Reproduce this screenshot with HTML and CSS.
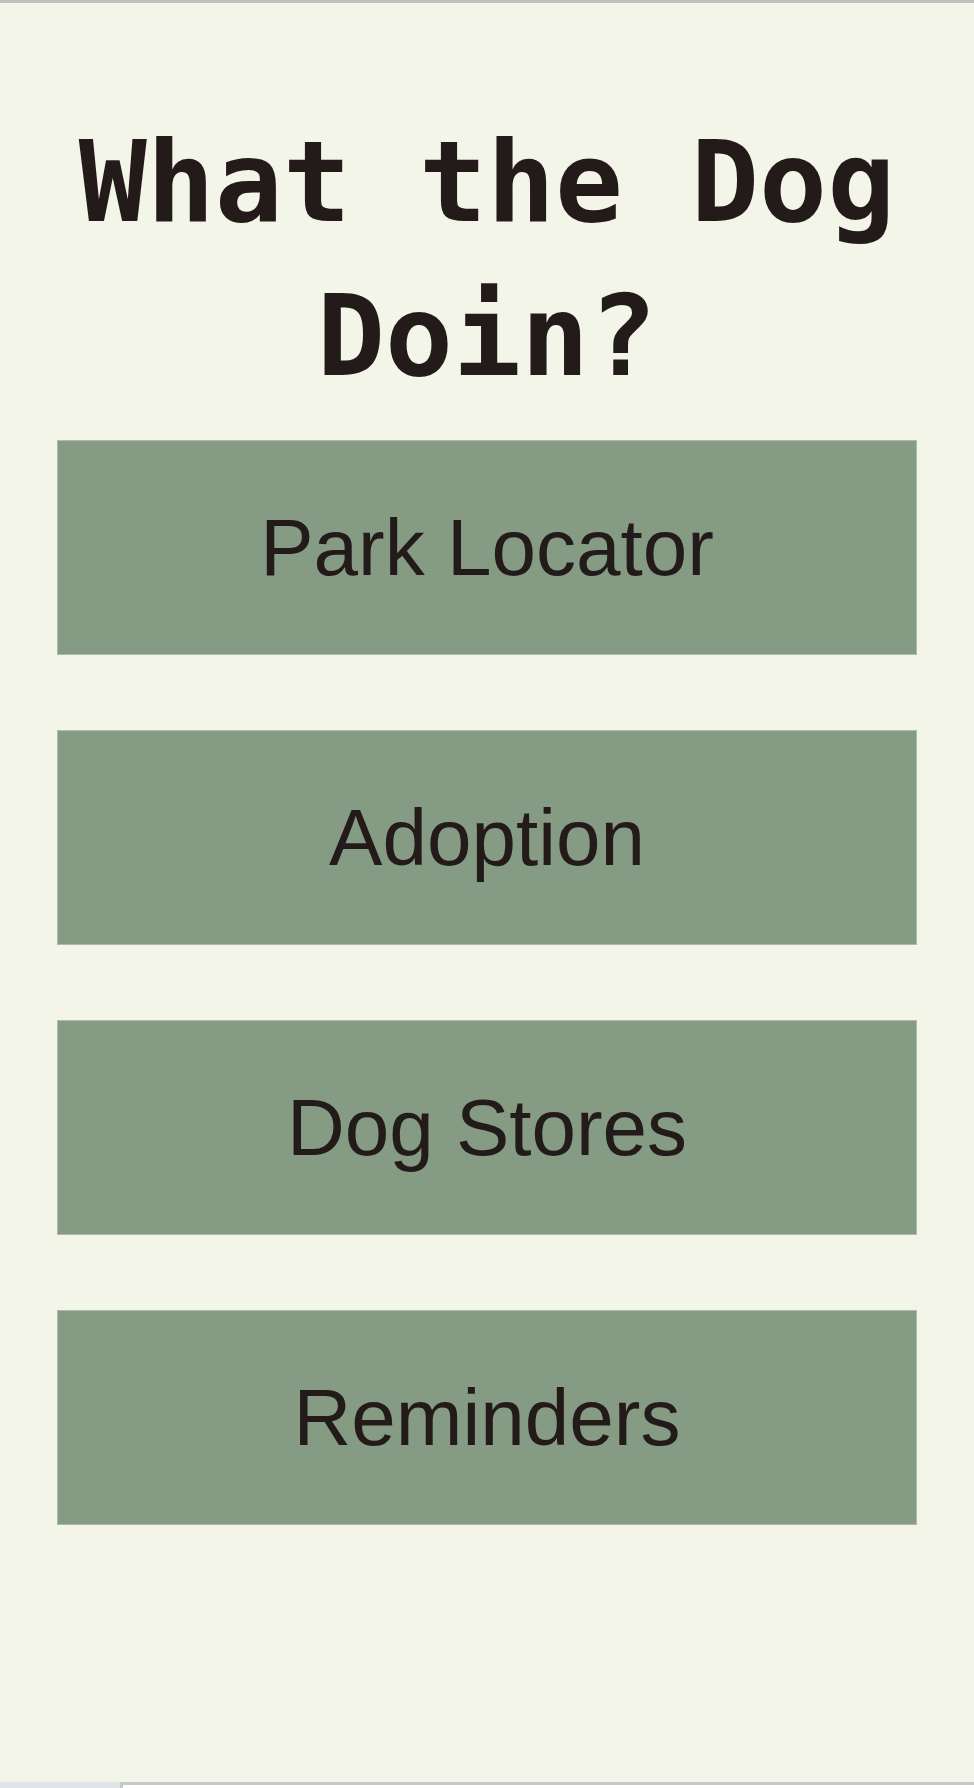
FILE: index.html
```html
<!DOCTYPE html>
<html lang="en">
<head>
<meta charset="utf-8">
<title>What the Dog Doin?</title>
<link rel="stylesheet" href="styles.css">
</head>
<body>
<div class="page">
  <div class="topbar"></div>
  <main class="content">
    <h1 class="title">What the Dog Doin?</h1>
    <nav class="menu">
      <a class="menu-btn" href="#">Park Locator</a>
      <a class="menu-btn" href="#">Adoption</a>
      <a class="menu-btn" href="#">Dog Stores</a>
      <a class="menu-btn" href="#">Reminders</a>
    </nav>
  </main>
  <div class="bottombar">
    <div class="bottom-left"></div>
    <div class="bottom-right"><div class="bottom-inner"></div></div>
  </div>
</div>
</body>
</html>
```

FILE: styles.css
```css
* { box-sizing: border-box; }
html, body { margin: 0; padding: 0; }
body {
  background: #f3f5e9;
  color: #231a1a;
  font-family: "Liberation Sans", Arial, sans-serif;
}
.page {
  height: 1788px;
  display: flex;
  flex-direction: column;
  overflow: hidden;
}
.topbar {
  height: 3px;
  background: #c0c0c0;
  flex: none;
}
.content {
  flex: 1;
  padding: 102px 57px 0;
}
.title {
  margin: 0;
  font-family: "DejaVu Sans Mono", "Liberation Mono", monospace;
  font-weight: bold;
  font-size: 113px;
  line-height: 154px;
  text-align: center;
  color: #231a1a;
}
.menu {
  margin-top: 27px;
  display: flex;
  flex-direction: column;
  gap: 75px;
}
.menu-btn {
  height: 215px;
  display: flex;
  align-items: center;
  justify-content: center;
  background: #859b84;
  border: 1px solid #aebba9;
  color: #231a1a;
  text-decoration: none;
  font-family: "Liberation Sans", Arial, sans-serif;
  font-size: 80px;
}
.bottombar {
  height: 6px;
  flex: none;
  display: flex;
}
.bottom-left {
  width: 120px;
  background: #dee4e7;
}
.bottom-right {
  flex: 1;
  background: #c8c8c8;
  padding: 3px 0 0 3px;
}
.bottom-inner {
  height: 100%;
  background: #ffffff;
}
```
